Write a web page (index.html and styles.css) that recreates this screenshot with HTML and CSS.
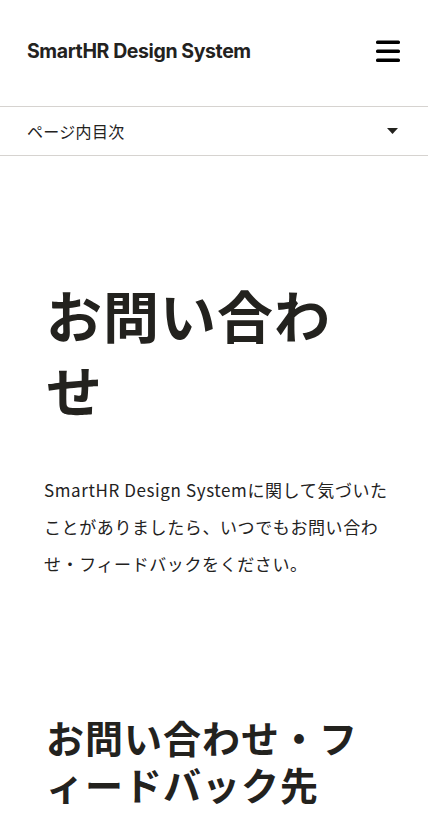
FILE: index.html
```html
<!DOCTYPE html>
<html lang="ja">
<head>
    <meta charset="UTF-8">
    <meta name="viewport" content="width=device-width, initial-scale=1.0">
    <title>お問い合わせ | SmartHR Design System</title>
    <link rel="stylesheet" href="styles.css">
</head>
<body>
    <!-- ヘッダー -->
    <header class="header">
        <div class="logo">SmartHR Design System</div>
        <button class="menu-button" aria-label="メニュー">
            <svg width="24" height="22" viewBox="0 0 24 22">
                <rect x="0" y="0.5" width="24" height="3.5" rx="1.5" fill="#000"></rect>
                <rect x="0" y="9.5" width="24" height="3.5" rx="1.5" fill="#000"></rect>
                <rect x="0" y="18.5" width="24" height="3.5" rx="1.5" fill="#000"></rect>
            </svg>
        </button>
    </header>
    <!-- ページ内目次 -->
    <div class="toc">
        <span class="toc-label">ページ内目次</span>
        <svg class="toc-arrow" width="11" height="6" viewBox="0 0 11 6">
            <path d="M0 0 H11 L5.5 6 Z" fill="#23221e"></path>
        </svg>
    </div>
    <!-- 本文 -->
    <main class="content">
        <h1 class="page-title">お問い合わせ</h1>
        <p class="lead">SmartHR Design Systemに関して気づいたことがありましたら、いつでもお問い合わせ・フィードバックをください。</p>
        <h2 class="section-title">お問い合わせ・フィードバック先</h2>
    </main>
</body>
</html>
```

FILE: styles.css
```css
body {
    margin: 0;
    background: #fff;
    color: #23221e;
    font-family: "Noto Sans CJK JP", "Noto Sans", sans-serif;
}

.header {
    height: 106px;
    display: flex;
    align-items: center;
    justify-content: space-between;
    padding: 0 27px;
    box-sizing: border-box;
}

    .header .logo {
        font-family: Inter, "Noto Sans", sans-serif;
        font-weight: 700;
        font-size: 19.5px;
        letter-spacing: -0.4px;
        color: #23221e;
        margin-top: -4px;
    }

.menu-button {
    border: 0;
    background: none;
    padding: 0;
    margin-right: 1px;
    margin-top: -4px;
    display: flex;
}

.toc {
    height: 48px;
    border-top: 1px solid #d6d3d0;
    border-bottom: 1px solid #d6d3d0;
    display: flex;
    align-items: center;
    justify-content: space-between;
    padding: 0 30px 0 27px;
}

    .toc .toc-label {
        font-size: 16px;
        letter-spacing: 0.3px;
    }

.content {
    padding: 120px 40px 40px 44px;
}

.page-title {
    margin: 0 6px 0 2px;
    font-size: 56px;
    font-weight: 700;
    line-height: 75px;
    letter-spacing: 1px;
}

.lead {
    margin: 45px 0 0;
    font-size: 17px;
    line-height: 37px;
    letter-spacing: 0.6px;
}

.section-title {
    margin: 131px 0 0 2px;
    font-size: 38px;
    font-weight: 700;
    line-height: 47px;
    letter-spacing: 1px;
}
```
